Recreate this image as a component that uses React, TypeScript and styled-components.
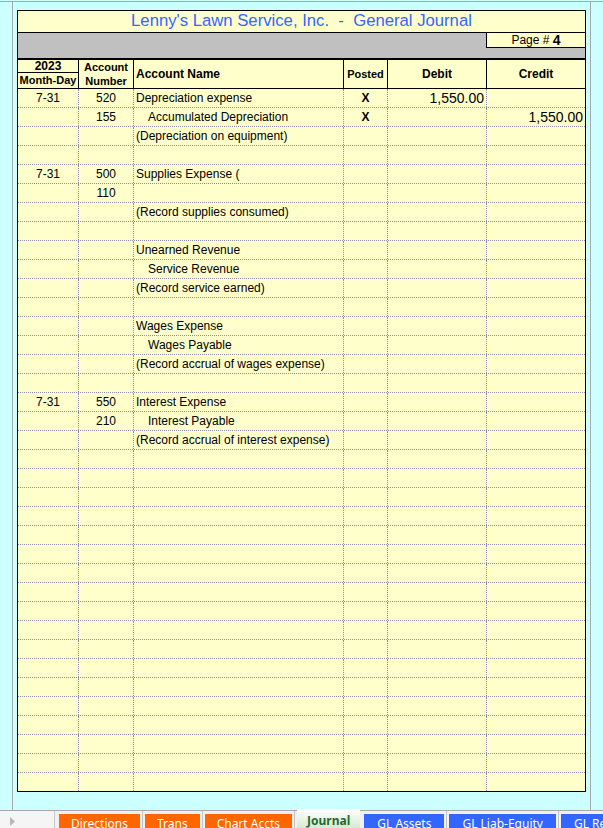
import React from 'react';
import styled, { createGlobalStyle } from 'styled-components';

const GlobalStyle = createGlobalStyle`
    html, body {
        margin: 0;
        padding: 0;
        overflow: hidden;
    }
    body {
        font-family: 'Liberation Sans', Arial, sans-serif;
    }
`;

// Column widths (each includes its right grid line)
const COLUMNS = '61px 55px 210px 44px 99px 98px';
const DOT = '1px dotted #8c8ca4';

type Entry = {
    date?: string;
    acct?: string;
    name?: string;
    indent?: boolean;
    posted?: boolean;
    debit?: string;
    credit?: string;
};

const entries: Entry[] = [
    { date: '7-31', acct: '520', name: 'Depreciation expense', posted: true, debit: '1,550.00' },
    { acct: '155', name: 'Accumulated Depreciation', indent: true, posted: true, credit: '1,550.00' },
    { name: '(Depreciation on equipment)' },
    {},
    { date: '7-31', acct: '500', name: 'Supplies Expense (' },
    { acct: '110' },
    { name: '(Record supplies consumed)' },
    {},
    { name: 'Unearned Revenue' },
    { name: 'Service Revenue', indent: true },
    { name: '(Record service earned)' },
    {},
    { name: 'Wages Expense' },
    { name: 'Wages Payable', indent: true },
    { name: '(Record accrual of wages expense)' },
    {},
    { date: '7-31', acct: '550', name: 'Interest Expense' },
    { acct: '210', name: 'Interest Payable', indent: true },
    { name: '(Record accrual of interest expense)' },
];

const ROW_COUNT = 37;

const tabs = [
    { label: 'Directions', tone: 'orange' },
    { label: 'Trans', tone: 'orange' },
    { label: 'Chart Accts', tone: 'orange' },
    { label: 'Journal', tone: 'active' },
    { label: 'GL Assets', tone: 'blue' },
    { label: 'GL Liab-Equity', tone: 'blue' },
    { label: 'GL Rev-Exp', tone: 'blue' },
];

// Styled components
const Page = styled.div`
    width: 603px;
    height: 828px;
    background: #ccffff;
    display: flex;
    flex-direction: column;
    padding-top: 1px;
    box-sizing: border-box;
    overflow: hidden;
`;

const PaneArea = styled.div`
    flex: 1;
    border-top: 1px solid #a8a8a8;
    display: flex;
    min-height: 0;
`;

const Frame = styled.div`
    margin-left: 12px;
    width: 579px;
    box-sizing: border-box;
    border-left: 1px solid #a8a8a8;
    border-right: 1px solid #a8a8a8;
    padding: 8px 0 0 4px;
`;

const Sheet = styled.div`
    width: 569px;
    box-sizing: border-box;
    border: 1px solid #000;
    background: #ffffcc;
    font-size: 12px;
    color: #000;
`;

const TitleRow = styled.div`
    height: 22px;
    box-sizing: border-box;
    border-bottom: 1px solid #000;
    display: flex;
    align-items: center;
    justify-content: center;
    font-size: 16.7px;
    color: #3366ff;
    white-space: pre;
    padding-bottom: 1px;
`;

const GrayBand = styled.div`
    height: 25px;
    background: #c0c0c0;
    display: flex;
    justify-content: flex-end;
    align-items: flex-start;
`;

const PageBox = styled.div`
    width: 99px;
    height: 15px;
    box-sizing: border-box;
    background: #ffffcc;
    border-left: 1px solid #000;
    border-bottom: 1px solid #000;
    display: flex;
    align-items: center;
    justify-content: center;
    font-size: 12px;
    line-height: 14px;
    white-space: pre;
`;

const PageNum = styled.b`
    font-size: 14px;
`;

const HeaderRow = styled.div`
    display: grid;
    grid-template-columns: ${COLUMNS};
    height: 31px;
    box-sizing: border-box;
    border-top: 2px solid #000;
    border-bottom: 1px solid #000;
    font-weight: bold;
`;

const HeadCell = styled.div<{ $align?: string; $small?: boolean; $last?: boolean }>`
    display: flex;
    flex-direction: column;
    align-items: ${(p) => p.$align ?? 'center'};
    justify-content: center;
    text-align: center;
    border-right: ${(p) => (p.$last ? 'none' : '1px solid #000')};
    font-size: ${(p) => (p.$small ? '11px' : '12px')};
    line-height: 14px;
    padding-left: ${(p) => (p.$align === 'flex-start' ? '2px' : '0')};
    white-space: nowrap;
    overflow: hidden;
`;

const SplitHead = styled.div`
    display: grid;
    grid-template-rows: 13px 15px;
    border-right: 1px solid #000;
    font-size: 11px;
    line-height: 13px;
    text-align: center;
    white-space: nowrap;
    overflow: hidden;
`;

const SplitTop = styled.div`
    border-bottom: 1px solid #000;
    font-size: 12px;
`;

const SplitBottom = styled.div`
    line-height: 15px;
`;

const Row = styled.div`
    display: grid;
    grid-template-columns: ${COLUMNS};
    height: 19px;
    box-sizing: border-box;
    border-bottom: ${DOT};

    &:last-child {
        height: 18px;
        border-bottom: none;
    }
`;

const Cell = styled.div<{
    $align?: string;
    $indent?: boolean;
    $bold?: boolean;
    $money?: boolean;
    $last?: boolean;
}>`
    border-right: ${(p) => (p.$last ? 'none' : DOT)};
    text-align: ${(p) => p.$align ?? 'left'};
    padding: 1px ${(p) => (p.$align === 'right' ? '2px' : '0')} 0
        ${(p) => (p.$indent ? '14px' : p.$align === 'left' ? '2px' : '0')};
    font-weight: ${(p) => (p.$bold ? 'bold' : 'normal')};
    font-size: ${(p) => (p.$money ? '14px' : '12px')};
    line-height: ${(p) => (p.$money ? '16px' : '17px')};
    white-space: nowrap;
    overflow: hidden;
`;

const TabBar = styled.div`
    height: 17px;
    flex-shrink: 0;
    border-top: 1px solid #a8a8a8;
    background: #f0f0f0;
    display: flex;
    align-items: stretch;
    overflow: visible;
`;

const NavArea = styled.div`
    width: 55px;
    flex-shrink: 0;
    background: #f5f5f5;
    border-right: 1px solid #c8c8c8;
    display: flex;
    align-items: flex-end;
    padding: 0 0 2px 10px;
    box-sizing: border-box;
`;

const TabStrip = styled.div`
    display: flex;
    align-items: flex-end;
    padding-left: 2px;
`;

const TabSlot = styled.div<{ $active?: boolean }>`
    display: flex;
    align-items: flex-end;
    height: 100%;
    padding: 0 2px;
    border-right: ${(p) => (p.$active ? 'none' : '1px solid #c4c4c4')};
`;

const tabBg: Record<string, string> = {
    orange: '#ff6600',
    blue: '#3366ff',
    active: 'linear-gradient(#ffffff, #d6ead2)',
};

const Tab = styled.div<{ $tone: string }>`
    height: ${(p) => (p.$tone === 'active' ? '19px' : '14px')};
    margin-top: ${(p) => (p.$tone === 'active' ? '-2px' : '0')};
    padding: ${(p) => (p.$tone === 'active' ? '2px 10px 0' : p.$tone === 'blue' ? '0 13px' : '0 12px')};
    box-sizing: border-box;
    background: ${(p) => tabBg[p.$tone]};
    color: ${(p) => (p.$tone === 'active' ? '#1e6b2e' : '#ffffff')};
    font-family: 'Noto Sans', 'Open Sans', sans-serif;
    font-weight: ${(p) => (p.$tone === 'active' ? 'bold' : 'normal')};
    font-size: 12px;
    line-height: 20px;
    white-space: nowrap;
    overflow: hidden;
    align-self: flex-end;
`;

function JournalRow({ e }: { e: Entry }) {
    return (
        <Row>
            <Cell $align="center">{e.date}</Cell>
            <Cell $align="center">{e.acct}</Cell>
            <Cell $align="left" $indent={e.indent}>{e.name}</Cell>
            <Cell $align="center" $bold>{e.posted ? 'X' : ''}</Cell>
            <Cell $align="right" $money>{e.debit}</Cell>
            <Cell $align="right" $money $last>{e.credit}</Cell>
        </Row>
    );
}

export default function App() {
    const rows: Entry[] = [...entries];
    while (rows.length < ROW_COUNT) rows.push({});

    return (
        <Page>
            <GlobalStyle />
            <PaneArea>
                <Frame>
                    <Sheet>
                        <TitleRow>Lenny's Lawn Service, Inc.  -  General Journal</TitleRow>
                        <GrayBand>
                            <PageBox>
                                Page # <PageNum>4</PageNum>
                            </PageBox>
                        </GrayBand>
                        <HeaderRow>
                            <SplitHead>
                                <SplitTop>2023</SplitTop>
                                <SplitBottom>Month-Day</SplitBottom>
                            </SplitHead>
                            <HeadCell $small>
                                <span>Account</span>
                                <span>Number</span>
                            </HeadCell>
                            <HeadCell $align="flex-start">Account Name</HeadCell>
                            <HeadCell $small>Posted</HeadCell>
                            <HeadCell>Debit</HeadCell>
                            <HeadCell $last>Credit</HeadCell>
                        </HeaderRow>
                        {rows.map((e, i) => (
                            <JournalRow key={i} e={e} />
                        ))}
                    </Sheet>
                </Frame>
            </PaneArea>
            <TabBar>
                <NavArea>
                    <svg width="6" height="9" viewBox="0 0 6 9">
                        <polygon points="0,0 5,4.5 0,9" fill="#b8b8b8" />
                    </svg>
                </NavArea>
                <TabStrip>
                    {tabs.map((t) => (
                        <TabSlot key={t.label} $active={t.tone === 'active'}>
                            <Tab $tone={t.tone}>{t.label}</Tab>
                        </TabSlot>
                    ))}
                </TabStrip>
            </TabBar>
        </Page>
    );
}
